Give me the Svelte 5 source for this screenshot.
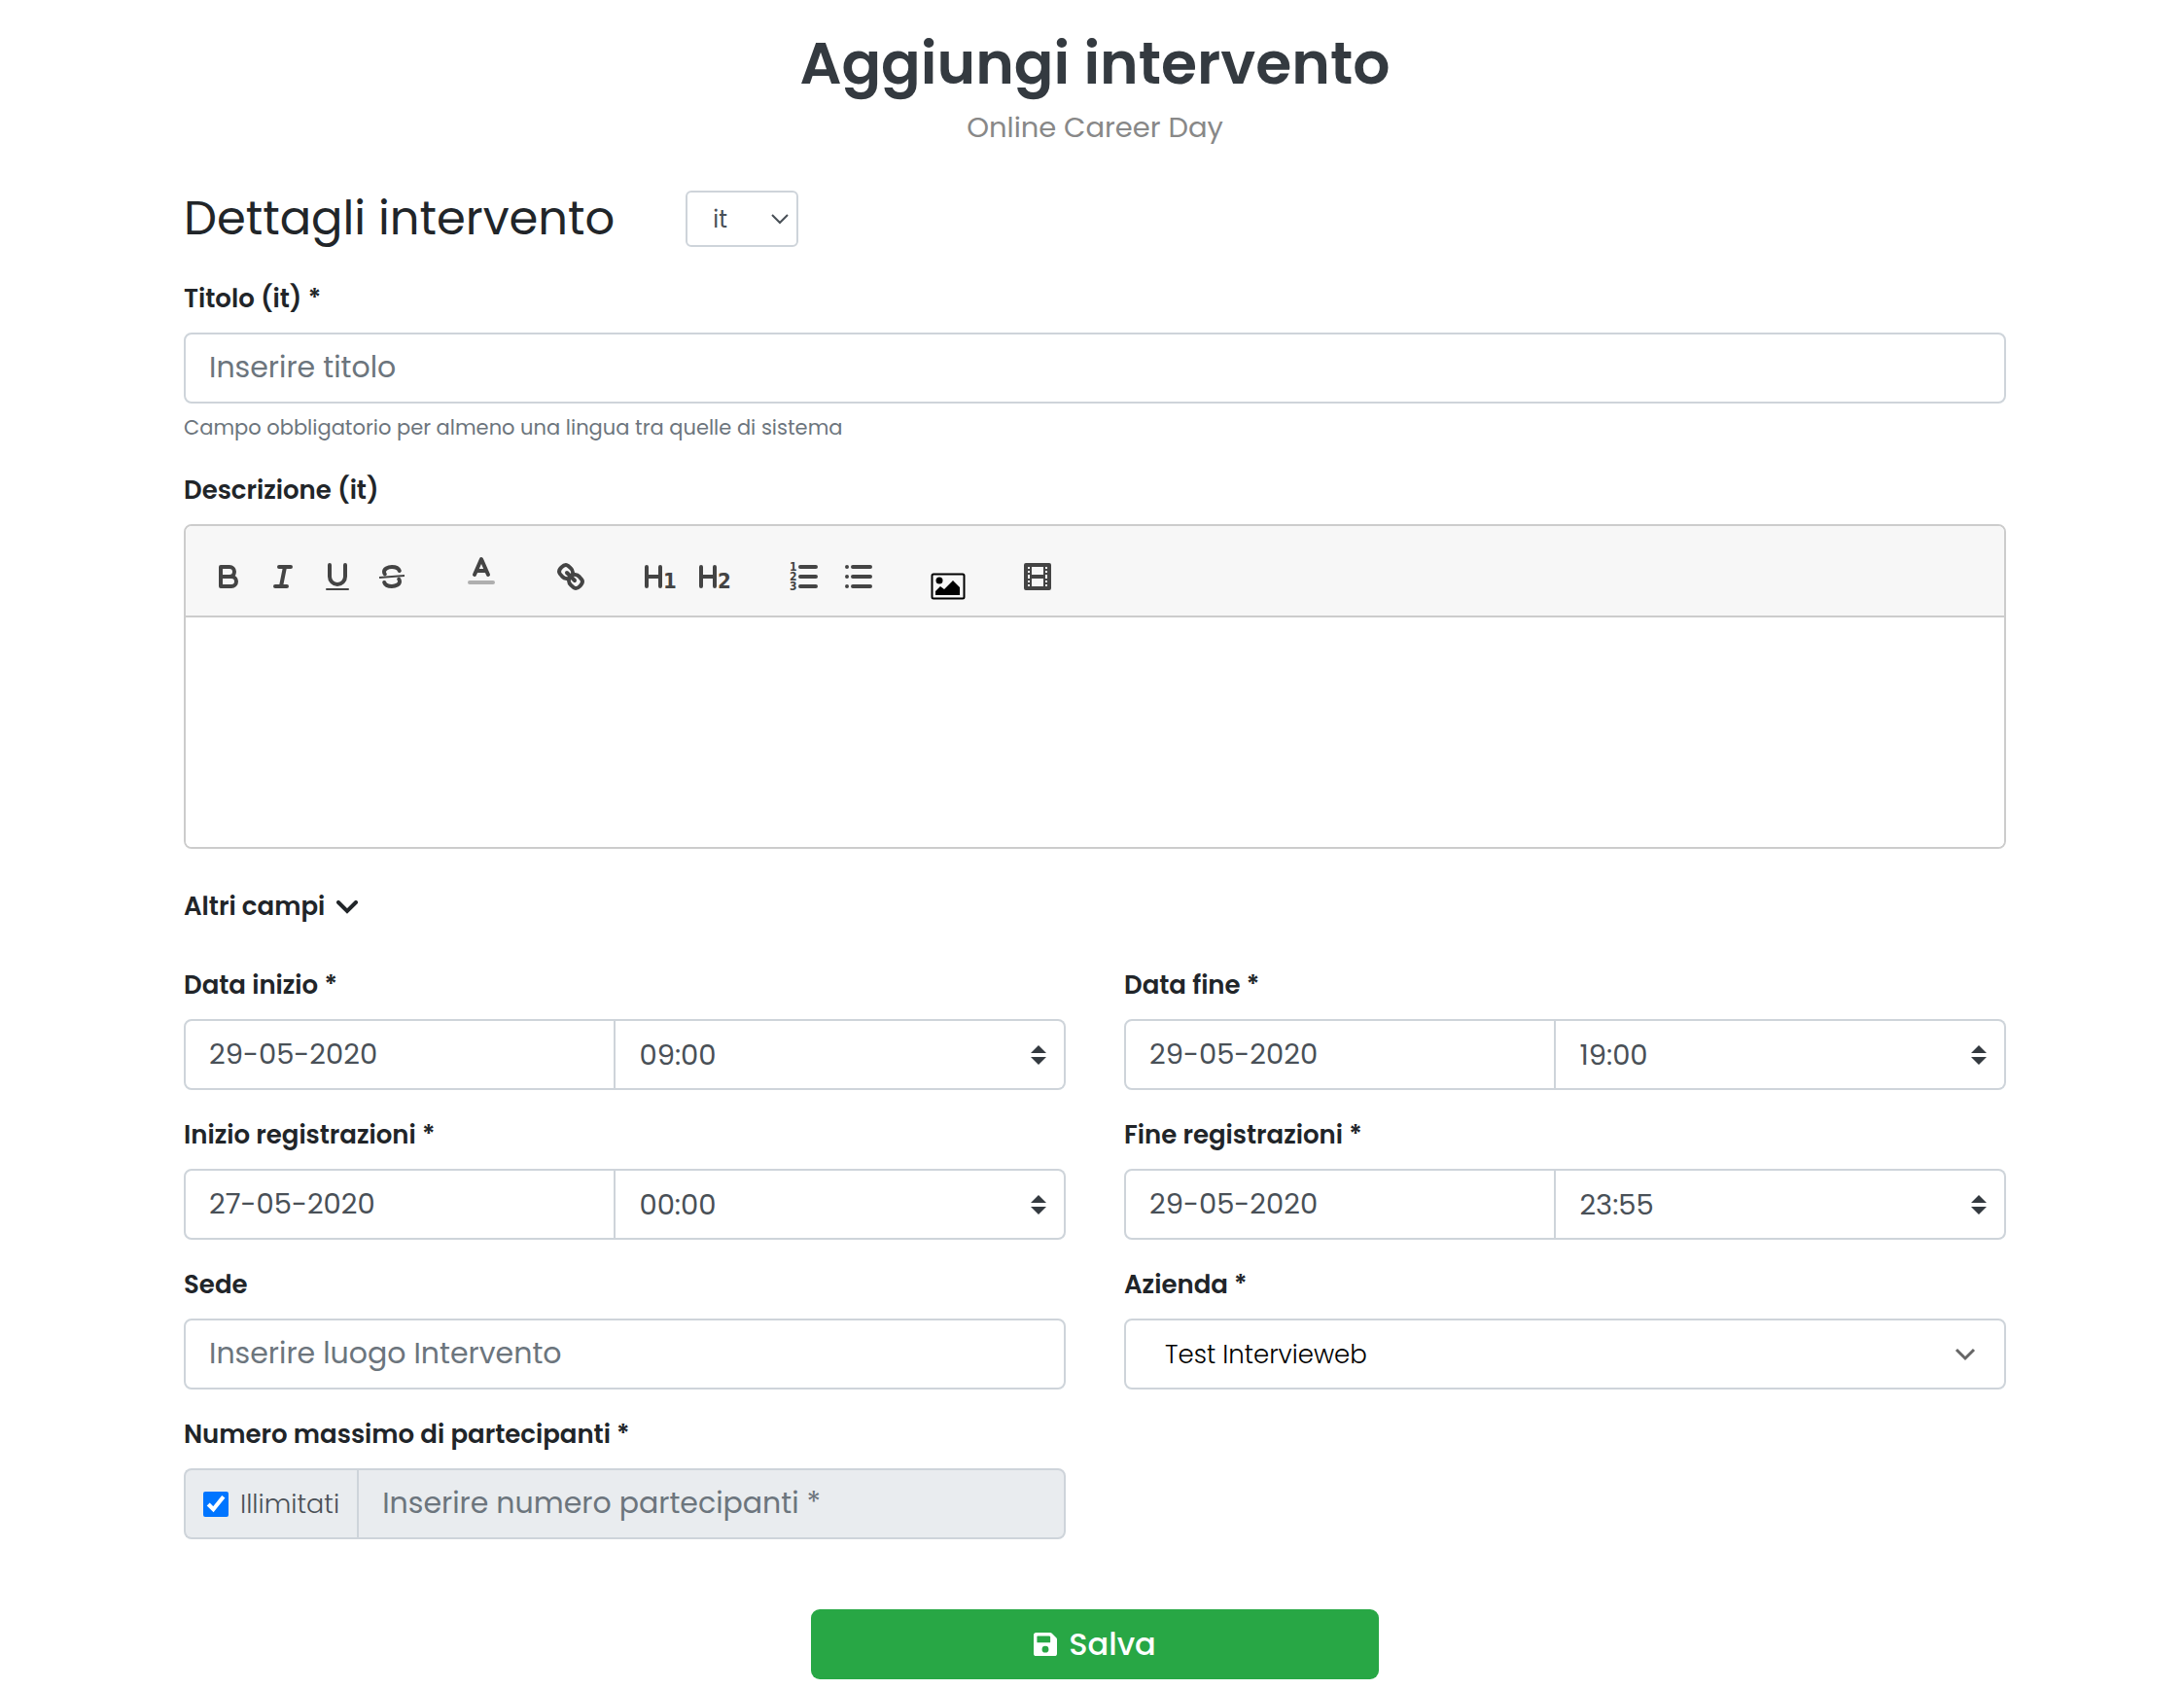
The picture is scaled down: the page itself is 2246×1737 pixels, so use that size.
<script lang="ts">
	type DateField = { id: string; label: string; date: string; time: string };

	const dateFields: DateField[] = [
		{ id: 'start', label: 'Data inizio *', date: '29-05-2020', time: '09:00' },
		{ id: 'end', label: 'Data fine *', date: '29-05-2020', time: '19:00' },
		{ id: 'reg-start', label: 'Inizio registrazioni *', date: '27-05-2020', time: '00:00' },
		{ id: 'reg-end', label: 'Fine registrazioni *', date: '29-05-2020', time: '23:55' }
	];

	let lang = $state('it');
	let unlimited = $state(true);
</script>

<main class="page">
	<header class="page-header">
		<h1>Aggiungi intervento</h1>
		<p>Online Career Day</p>
	</header>

	<form onsubmit={(e) => e.preventDefault()}>
		<div class="section-head">
			<h2>Dettagli intervento</h2>
			<div class="select lang-select">
				<select bind:value={lang} aria-label="Lingua">
					<option value="it">it</option>
					<option value="en">en</option>
				</select>
				<svg class="thin-arrow" viewBox="0 0 18 11" aria-hidden="true">
					<path d="M1 1l8 8 8-8" />
				</svg>
			</div>
		</div>

		<div class="field">
			<label for="title">Titolo ({lang}) *</label>
			<input id="title" class="control" type="text" placeholder="Inserire titolo" />
			<small>Campo obbligatorio per almeno una lingua tra quelle di sistema</small>
		</div>

		<div class="field">
			<label for="description">Descrizione ({lang})</label>
			<div class="editor">
				<div class="toolbar">
					<div class="group">
						<button type="button" aria-label="Grassetto">
							<svg viewBox="0 0 18 18">
								<path d="M5 4h4.500a2.500 2.500 0 0 1 0 5H5z" />
								<path d="M5 9h5.500a2.500 2.500 0 0 1 0 5H5z" />
							</svg>
						</button>
						<button type="button" aria-label="Corsivo">
							<svg viewBox="0 0 18 18">
								<path d="M7 4h6M5 14h6M8 14l2-10" />
							</svg>
						</button>
						<button type="button" aria-label="Sottolineato">
							<svg viewBox="0 0 18 18">
								<path d="M5 3v6a4 4 0 0 0 8 0V3" />
								<rect class="fill" x="3" y="15" width="12" height="1" rx="0.5" />
							</svg>
						</button>
						<button type="button" aria-label="Barrato">
							<svg viewBox="0 0 18 18">
								<path d="M12.900 6C12.500 4.900 10.900 4 9 4 6.800 4 5 5.100 5 6.500c0 .5.100.9.400 1.200" />
								<path d="M5.100 12C5.500 13.100 7.100 14 9 14c2.200 0 4-1.100 4-2.500 0-.5-.1-.9-.4-1.200" />
								<path class="thin" d="M2.500 9.500l13-1" />
							</svg>
						</button>
					</div>
					<div class="group">
						<button type="button" aria-label="Colore testo">
							<svg viewBox="0 0 18 18">
								<path class="faded" d="M3 12h12" />
								<path d="M5.500 8L9 0l3.500 8M6.400 6h5.200" />
							</svg>
						</button>
					</div>
					<div class="group">
						<button type="button" aria-label="Collegamento">
							<svg viewBox="0 0 18 18">
								<path d="M7 7l4 4" />
								<path
									d="M8.900 4.577a3.476 3.476 0 0 1 .36 4.679A3.476 3.476 0 0 1 4.577 8.900C3.185 7.500 2.035 6.400 4.217 4.217S7.500 3.185 8.900 4.577z"
								/>
								<path
									d="M13.423 9.100a3.476 3.476 0 0 0-4.679-.36 3.476 3.476 0 0 0 .36 4.679c1.392 1.392 2.500 2.542 4.679.36S14.815 10.500 13.423 9.100z"
								/>
							</svg>
						</button>
					</div>
					<div class="group">
						<button type="button" aria-label="Titolo 1">
							<svg viewBox="0 0 18 18">
								<path d="M2 4v10M9 4v10M2 9h7" />
								<text x="10.500" y="15" font-size="11">1</text>
							</svg>
						</button>
						<button type="button" aria-label="Titolo 2">
							<svg viewBox="0 0 18 18">
								<path d="M2 4v10M9 4v10M2 9h7" />
								<text x="10.500" y="15" font-size="11">2</text>
							</svg>
						</button>
					</div>
					<div class="group">
						<button type="button" aria-label="Elenco numerato">
							<svg viewBox="0 0 18 18">
								<path d="M7 4h8M7 9h8M7 14h8" />
								<text x="1.500" y="6" font-size="6">1</text>
								<text x="1.500" y="11" font-size="6">2</text>
								<text x="1.500" y="16" font-size="6">3</text>
							</svg>
						</button>
						<button type="button" aria-label="Elenco puntato">
							<svg viewBox="0 0 18 18">
								<path d="M6 4h9M6 9h9M6 14h9M3 4h0M3 9h0M3 14h0" />
							</svg>
						</button>
					</div>
					<div class="group">
						<button type="button" aria-label="Immagine">
							<svg class="picture" viewBox="0 0 36 36">
								<rect x="1.500" y="15.500" width="33" height="25" rx="1.500" />
								<circle cx="9" cy="22" r="3.500" />
								<path d="M5 37v-4l5-5 4 3 9-9 7 7v8z" />
							</svg>
						</button>
					</div>
					<div class="group">
						<button type="button" aria-label="Video">
							<svg viewBox="0 0 18 18">
								<rect x="3" y="3" width="12" height="12" />
								<path
									class="fill"
									d="M5 3h1v12H5zM12 3h1v12h-1zM5 8h8v2H5zM3 5h3v1H3zM3 7h3v1H3zM3 10h3v1H3zM3 12h3v1H3zM12 5h3v1h-3zM12 7h3v1h-3zM12 10h3v1h-3zM12 12h3v1h-3z"
								/>
							</svg>
						</button>
					</div>
				</div>
				<textarea id="description"></textarea>
			</div>
		</div>

		<button type="button" class="more">
			Altri campi
			<svg viewBox="0 0 22 14" aria-hidden="true">
				<path d="M2 2l9 9 9-9" />
			</svg>
		</button>

		<div class="columns">
			{#each dateFields as field (field.id)}
				<div class="field">
					<label for={field.id}>{field.label}</label>
					<div class="input-group">
						<input id={field.id} class="control date" type="text" value={field.date} />
						<div class="select time">
							<select class="control" aria-label="Ora - {field.label}">
								<option>{field.time}</option>
							</select>
							<svg class="sort-arrow" viewBox="0 0 4 5" aria-hidden="true">
								<path d="M2 0L0 2h4zm0 5L0 3h4z" />
							</svg>
						</div>
					</div>
				</div>
			{/each}

			<div class="field">
				<label for="place">Sede</label>
				<input id="place" class="control" type="text" placeholder="Inserire luogo Intervento" />
			</div>

			<div class="field">
				<label for="company">Azienda *</label>
				<div class="select company">
					<select id="company" class="control">
						<option>Test Intervieweb</option>
					</select>
					<svg class="company-arrow" viewBox="0 0 22 14" aria-hidden="true">
						<path d="M2 2l9 9 9-9" />
					</svg>
				</div>
			</div>

			<div class="field">
				<label for="seats">Numero massimo di partecipanti *</label>
				<div class="input-group">
					<label class="addon">
						<input type="checkbox" bind:checked={unlimited} />
						Illimitati
					</label>
					<input
						id="seats"
						class="control seats"
						type="text"
						placeholder="Inserire numero partecipanti *"
						disabled={unlimited}
					/>
				</div>
			</div>
		</div>

		<button type="submit" class="save">
			<svg viewBox="0 0 448 448" aria-hidden="true">
				<path
					fill-rule="evenodd"
					d="M434 98L350 14A48 48 0 0 0 316 0H48A48 48 0 0 0 0 48v352a48 48 0 0 0 48 48h352a48 48 0 0 0 48-48V132a48 48 0 0 0-14-34zM224 384a64 64 0 1 1 0-128 64 64 0 0 1 0 128zM320 80v100a12 12 0 0 1-12 12H76a12 12 0 0 1-12-12V76a12 12 0 0 1 12-12h228z"
				/>
			</svg>
			Salva
		</button>
	</form>
</main>

<style>
	:global(body) {
		background: #fff;
	}

	.page {
		padding: 29px 183px 11px 189px;
		font-family: Poppins, Inter, 'Open Sans', sans-serif;
		font-size: 29px;
		font-weight: 400;
		color: #212529;
	}

	.page *,
	.page {
		box-sizing: border-box;
	}

	.page-header {
		text-align: center;
		margin-bottom: 43px;
	}

	h1 {
		margin: 0;
		font-size: 60px;
		font-weight: 600;
		line-height: 72px;
		color: #343a40;
	}

	.page-header p {
		margin: 8px 0 0;
		line-height: 44px;
		color: #888;
	}

	.section-head {
		display: flex;
		align-items: center;
		gap: 73px;
		margin-bottom: 34px;
	}

	h2 {
		margin: 0;
		font-size: 48px;
		font-weight: 400;
		line-height: 58px;
	}

	input,
	select,
	textarea,
	button {
		font: inherit;
		color: inherit;
		margin: 0;
	}

	label {
		font-size: 26px;
		font-weight: 600;
		line-height: 39px;
	}

	.field {
		display: flex;
		flex-direction: column;
		margin-bottom: 27px;
	}

	.field > label {
		align-self: flex-start;
		margin-bottom: 15px;
	}

	.control {
		width: 100%;
		height: 73px;
		padding: 0 24px;
		border: 2px solid #ced4da;
		border-radius: 8px;
		background: #fff;
		color: #495057;
		font-size: 29px;
	}

	.control::placeholder {
		font-size: 30px;
		color: #6c757d;
		opacity: 1;
	}

	small {
		margin: 10px 0 3px;
		font-size: 21px;
		line-height: 30px;
		color: #6c757d;
	}

	/* select and its arrow share one grid cell */
	.select {
		display: grid;
		align-items: center;
	}

	.select > * {
		grid-area: 1 / 1;
	}

	.select select {
		appearance: none;
		width: 100%;
	}

	.select svg {
		justify-self: end;
		pointer-events: none;
		fill: none;
	}

	.lang-select {
		width: 116px;
	}

	.lang-select select {
		height: 58px;
		padding: 0 26px;
		border: 2px solid #ced4da;
		border-radius: 6px;
		background: #fff;
		color: #495057;
		font-size: 24px;
	}

	.thin-arrow {
		width: 18px;
		margin-right: 10px;
		stroke: #495057;
		stroke-width: 2;
	}

	.editor {
		display: flex;
		flex-direction: column;
		border: 2px solid #ccc;
		border-radius: 8px;
		overflow: hidden;
	}

	.toolbar {
		display: flex;
		gap: 36px;
		padding: 34px 16px 22px;
		background: #f7f7f7;
		border-bottom: 2px solid #ccc;
	}

	.group {
		display: flex;
	}

	.group button {
		display: flex;
		justify-content: center;
		width: 56px;
		padding: 0;
		border: 0;
		background: none;
	}

	.group svg {
		width: 36px;
		height: 36px;
		overflow: visible;
		fill: none;
		stroke: #444;
		stroke-width: 2;
		stroke-linecap: round;
		stroke-linejoin: round;
	}

	.group svg .fill,
	.group svg text {
		fill: #444;
		stroke: none;
	}

	.group svg text {
		font-family: 'DejaVu Sans Condensed', 'DejaVu Sans', sans-serif;
		font-weight: 700;
	}

	.group svg .thin {
		stroke-width: 1;
		stroke-linecap: butt;
	}

	.group svg .faded {
		opacity: 0.4;
	}

	.group .picture {
		stroke: #000;
	}

	.group .picture circle,
	.group .picture path {
		fill: #000;
		stroke: none;
	}

	textarea {
		height: 236px;
		padding: 24px;
		border: 0;
		outline: 0;
		resize: none;
	}

	.more {
		display: flex;
		align-items: center;
		gap: 12px;
		margin: 40px 0 42px;
		padding: 0;
		border: 0;
		background: none;
		font-size: 26px;
		font-weight: 600;
		line-height: 39px;
	}

	.more svg {
		width: 22px;
		fill: none;
		stroke: #212529;
		stroke-width: 4;
		stroke-linecap: round;
	}

	.columns {
		display: grid;
		grid-template-columns: 1fr 1fr;
		column-gap: 60px;
	}

	.input-group {
		display: flex;
	}

	.date {
		width: 49%;
		border-radius: 8px 0 0 8px;
	}

	.time {
		width: 51%;
	}

	.time select {
		border-left: 0;
		border-radius: 0 8px 8px 0;
	}

	.select .sort-arrow {
		width: 16px;
		margin-right: 20px;
		fill: #343a40;
	}

	.company select {
		padding: 0 40px;
		font-size: 26px;
		font-weight: 300;
		color: #000;
	}

	.company-arrow {
		width: 22px;
		margin-right: 31px;
		stroke: #666;
		stroke-width: 3;
	}

	.addon {
		display: flex;
		align-items: center;
		gap: 12px;
		padding: 0 18px;
		border: 2px solid #ced4da;
		border-right: 0;
		border-radius: 8px 0 0 8px;
		background: #e9ecef;
		font-weight: 300;
		font-size: 27px;
		color: #495057;
	}

	.addon input {
		width: 26px;
		height: 26px;
		accent-color: #0075ff;
	}

	.seats {
		flex: 1;
		min-width: 0;
		border-radius: 0 8px 8px 0;
	}

	.seats:disabled {
		background: #e9ecef;
	}

	.save {
		display: flex;
		align-items: center;
		justify-content: center;
		gap: 12px;
		width: 584px;
		max-width: 100%;
		height: 72px;
		margin: 45px auto 0;
		border: 0;
		border-radius: 9px;
		background: #28a745;
		color: #fff;
		font-size: 32px;
		font-weight: 500;
	}

	.save svg {
		width: 24px;
		fill: #fff;
	}
</style>
